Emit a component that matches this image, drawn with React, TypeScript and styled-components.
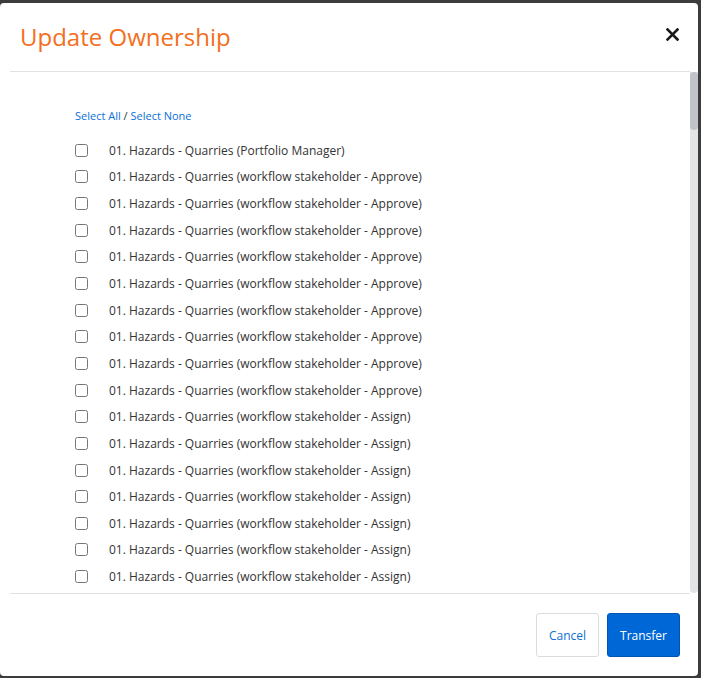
import React from 'react';
import styled, { createGlobalStyle } from 'styled-components';

const GlobalStyle = createGlobalStyle`
  html, body {
    margin: 0;
    padding: 0;
    height: 100%;
    background: #3c3c3c;
    font-family: 'Open Sans', 'Noto Sans', sans-serif;
  }
  #root {
    height: 100%;
  }
`;

const Overlay = styled.div`
  height: 678px;
  box-sizing: border-box;
  padding: 3px 3px 2px 0;
  display: flex;
`;

const Modal = styled.div`
  flex: 1;
  background: #fff;
  border-radius: 4px;
  display: flex;
  flex-direction: column;
  overflow: hidden;
`;

const Header = styled.div`
  height: 69px;
  flex-shrink: 0;
  box-sizing: border-box;
  margin: 0 8px 0 10px;
  padding: 0 10px;
  border-bottom: 1px solid #e2e2e2;
  display: flex;
  align-items: center;
  justify-content: space-between;
`;

const Title = styled.h2`
  margin: 0;
  font-size: 24px;
  font-weight: 400;
  color: #f36f1e;
  transform: translateY(-1px);
`;

const CloseButton = styled.button`
  border: 0;
  background: none;
  padding: 0;
  width: 16px;
  height: 16px;
  display: flex;
  align-items: center;
  justify-content: center;
  cursor: pointer;
  transform: translateY(-3px);
`;

const BodyRow = styled.div`
  height: 521px;
  flex-shrink: 0;
  margin-left: 10px;
  display: flex;
`;

const List = styled.div`
  flex: 1;
  overflow-y: auto;
  scrollbar-width: none;
  padding: 36px 0 0 65px;
  box-sizing: border-box;

  &::-webkit-scrollbar {
    display: none;
  }
`;

// native scrollbars are hidden in the capture, so the track is drawn beside the list
const ScrollTrack = styled.div`
  width: 8px;
  background: #e3e4e6;
  border-radius: 0 0 4px 4px;
  display: flex;
  flex-direction: column;
`;

const ScrollThumb = styled.div`
  height: 58px;
  background: #c0c4c8;
  border-radius: 4px;
`;

const SelectLinks = styled.div`
  font-size: 11px;
  color: #333;
  height: 16px;
  line-height: 16px;
  margin-bottom: 13px;
`;

const LinkText = styled.a`
  color: #0b6fd6;
  text-decoration: none;
  cursor: pointer;
`;

const Row = styled.label`
  display: flex;
  align-items: center;
  height: 26.65px;
  font-size: 12px;
  color: #333;
`;

const Check = styled.input`
  width: 13px;
  height: 13px;
  margin: 0 21px 0 0;
`;

const Footer = styled.div`
  flex: 1;
  margin: 0 0 0 10px;
  display: flex;
  align-items: center;
  justify-content: flex-end;
  gap: 8px;
  padding-right: 18px;
  position: relative;

  &::before {
    content: '';
    position: absolute;
    top: 0;
    left: 0;
    right: 8px;
    border-top: 1px solid #e2e2e2;
  }
`;

const Button = styled.button<{ $primary?: boolean }>`
  height: 44px;
  padding: 0 12px;
  font-family: inherit;
  font-size: 12px;
  border-radius: 3px;
  cursor: pointer;
  border: 1px solid ${(p) => (p.$primary ? '#0054b4' : '#dcdcdc')};
  background: ${(p) => (p.$primary ? '#0067d6' : '#fff')};
  color: ${(p) => (p.$primary ? '#fff' : '#0b6fd6')};
  margin-top: 1px;
`;

const roles: string[] = [
  'Portfolio Manager',
  ...Array(9).fill('workflow stakeholder - Approve'),
  ...Array(40).fill('workflow stakeholder - Assign'),
  ...Array(40).fill('workflow stakeholder - Review'),
  ...Array(40).fill('workflow stakeholder - Notify'),
  ...Array(42).fill('Risk Owner'),
];

export default function App() {
  return (
    <>
      <GlobalStyle />
      <Overlay>
        <Modal>
          <Header>
            <Title>Update Ownership</Title>
            <CloseButton aria-label="Close">
              <svg width="13" height="13" viewBox="0 0 13 13">
                <path d="M1.5 1.5 L11.5 11.5 M11.5 1.5 L1.5 11.5" stroke="#1a1a1a" strokeWidth="2.6" strokeLinecap="square" />
              </svg>
            </CloseButton>
          </Header>
          <BodyRow>
            <List>
              <SelectLinks>
                <LinkText>Select All</LinkText> / <LinkText>Select None</LinkText>
              </SelectLinks>
              {roles.map((role, i) => (
                <Row key={i}>
                  <Check type="checkbox" />
                  01. Hazards - Quarries ({role})
                </Row>
              ))}
            </List>
            <ScrollTrack>
              <ScrollThumb />
            </ScrollTrack>
          </BodyRow>
          <Footer>
            <Button>Cancel</Button>
            <Button $primary>Transfer</Button>
          </Footer>
        </Modal>
      </Overlay>
    </>
  );
}
